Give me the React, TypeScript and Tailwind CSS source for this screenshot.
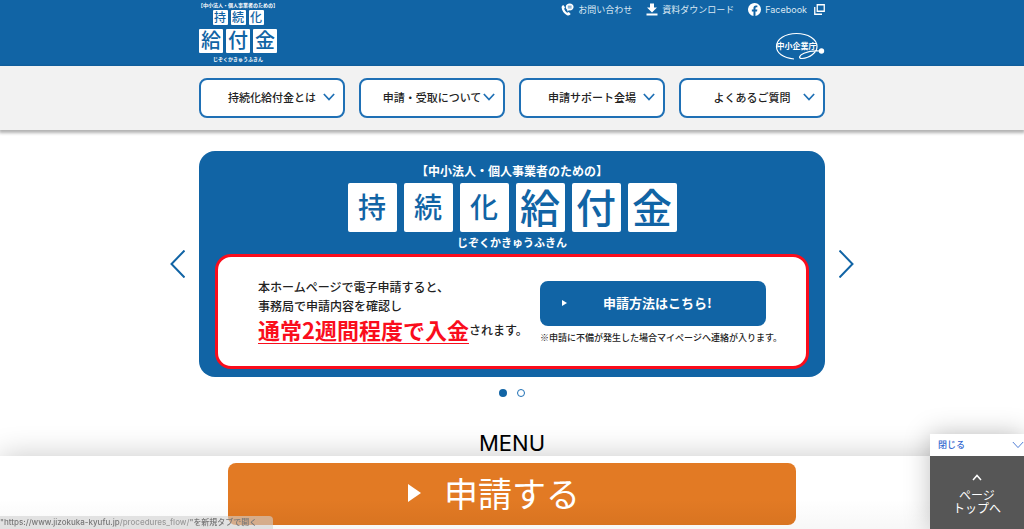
import type { ReactNode } from "react";

type NavItem = {
  label: string;
  href: string;
};

const navItems: NavItem[] = [
  { label: "持続化給付金とは", href: "#about" },
  { label: "申請・受取について", href: "#procedures" },
  { label: "申請サポート会場", href: "#support" },
  { label: "よくあるご質問", href: "#faq" },
];

const PhoneIcon = () => (
  <svg viewBox="0 0 26 26" className="size-[13px] text-white" fill="currentColor" aria-hidden="true">
    <path d="M4.500 4 8 8.600 6.400 11.600C7.400 14.800 9.600 17.800 12.400 19.600L15.600 18.200 19.400 22.200C18 24.800 15 25.800 12 24.400 6 21.600 1.600 15.400 1.200 9.200 1.200 6.800 2.400 4.800 4.500 4Z" />
    <path d="M17.400 1C12.900 1 9.600 4 9.600 8c0 2.600 1.200 4.600 3.200 5.800L12.400 17l3.600-2.300c.5.1.9.1 1.400.1 4.400 0 7.800-2.800 7.800-6.800S21.800 1 17.400 1Z" />
    <path d="M13.600 6.400h7.600M13.600 9.800h7.600" stroke="#1164a5" strokeWidth="1.500" />
  </svg>
);

const DownloadIcon = () => (
  <svg viewBox="0 0 24 26" className="h-[13px] w-3 text-white" fill="currentColor" aria-hidden="true">
    <path d="M8 1h8v8h6L12 19 2 9h6zM1 21h22v4H1z" />
  </svg>
);

const FacebookIcon = () => (
  <svg viewBox="0 0 24 24" className="size-[13px] text-white" fill="currentColor" aria-hidden="true">
    <path d="M24 12a12 12 0 1 0-13.900 11.900v-8.400H7.100V12h3V9.400c0-3 1.800-4.700 4.500-4.700 1.300 0 2.700.2 2.700.2v3h-1.500c-1.500 0-2 .9-2 1.900V12h3.400l-.5 3.500h-2.900v8.400A12 12 0 0 0 24 12Z" />
  </svg>
);

const WindowIcon = () => (
  <svg viewBox="0 0 22 22" className="ml-[3px] size-[11px] text-white" fill="none" stroke="currentColor" strokeWidth="2.600" aria-hidden="true">
    <path d="M6.500 1.500h14v13h-14z" />
    <path d="M1.500 6v14.500H16" />
  </svg>
);

const AgencyLogo = () => (
  <svg viewBox="0 0 50 30" className="h-[30px] w-[50px]" role="img" aria-label="中小企業庁">
    <path
      d="M19 27C8 26 1.500 21 1.500 14.500 1.500 7 10 1.500 21.500 1.500S42 7 42 14.500c0 6-7 11.500-15 12-4 .2-3-3 2-5.200 5-2.200 11-2.600 16-2.300"
      fill="none"
      stroke="#fff"
      strokeWidth="1.200"
    />
    <circle cx="46.500" cy="19" r="2.700" fill="#fff" />
    <text x="21.500" y="17" textAnchor="middle" fontSize="8" fontWeight="700" fill="#fff">
      中小企業庁
    </text>
  </svg>
);

const ChevronDown = ({ className }: { className: string }) => (
  <svg viewBox="0 0 14 9" className={className} fill="none" stroke="currentColor" aria-hidden="true">
    <path d="m1 1 6 6.500L13 1" />
  </svg>
);

const HeaderLink = ({ href, children }: { href: string; children: ReactNode }) => (
  <a href={href} className="flex items-center gap-1 text-[9px] leading-3 text-[#dbe8f3]">
    {children}
  </a>
);

const HeaderLogo = () => (
  <a href="#top" className="flex w-[78px] flex-col items-center text-white">
    <span className="text-[5px] leading-[10px] font-bold whitespace-nowrap">【中小法人・個人事業者のための】</span>
    <span className="flex gap-[3px]">
      {["持", "続", "化"].map((char) => (
        <span key={char} className="flex size-[15px] items-center justify-center rounded-[1px] bg-white pb-0.5 text-[12px] leading-none font-medium text-[#1164a5]">
          {char}
        </span>
      ))}
    </span>
    <span className="mt-1 flex gap-[3px]">
      {["給", "付", "金"].map((char) => (
        <span key={char} className="flex size-6 items-center justify-center rounded-[1px] bg-white pb-0.5 text-[20px] leading-none font-medium text-[#1164a5]">
          {char}
        </span>
      ))}
    </span>
    <span className="text-[5px] leading-[11px] font-bold">じぞくかきゅうふきん</span>
  </a>
);

const Header = () => (
  <header className="bg-[#1164a5]">
    <div className="mx-auto flex h-[66px] max-w-[626px] items-start justify-between">
      <HeaderLogo />
      <div className="flex flex-col items-end gap-4 pt-[3px]">
        <div className="flex gap-[14px]">
          <HeaderLink href="#contact">
            <PhoneIcon />
            お問い合わせ
          </HeaderLink>
          <HeaderLink href="#download">
            <DownloadIcon />
            資料ダウンロード
          </HeaderLink>
          <HeaderLink href="#facebook">
            <FacebookIcon />
            <span className="font-[Inter]">Facebook</span>
            <WindowIcon />
          </HeaderLink>
        </div>
        <AgencyLogo />
      </div>
    </div>
  </header>
);

const NavBar = () => (
  <nav className="bg-[#f2f2f2] py-3 shadow-[0_2px_3px_1px_rgba(0,0,0,0.3)]">
    <div className="mx-auto grid max-w-[626px] grid-cols-4 gap-[14px]">
      {navItems.map((item) => (
        <a
          key={item.label}
          href={item.href}
          className="grid h-10 grid-cols-[1fr_auto_1fr] items-center rounded-lg border-2 border-[#1f70b5] bg-white pb-0.5 text-[11px] font-medium text-[#222]"
        >
          <span className="col-start-2 whitespace-nowrap">{item.label}</span>
          <ChevronDown className="mr-2 h-2 w-3 justify-self-end stroke-2 text-[#1f70b5]" />
        </a>
      ))}
    </div>
  </nav>
);

const titleTiles = [
  { char: "持", size: "text-[28px]" },
  { char: "続", size: "text-[28px]" },
  { char: "化", size: "text-[28px]" },
  { char: "給", size: "text-[40px]" },
  { char: "付", size: "text-[40px]" },
  { char: "金", size: "text-[40px]" },
];

const Banner = () => (
  <section className="flex max-w-[626px] flex-1 flex-col items-center rounded-2xl bg-[#1164a5] px-4 pt-3 pb-2">
    <p className="text-xs leading-4 font-bold text-white">【中小法人・個人事業者のための】</p>
    <h1 className="mt-1 flex gap-[7px]">
      {titleTiles.map((tile) => (
        <span
          key={tile.char}
          className={`flex size-[49px] items-center justify-center rounded-xs bg-white pb-1 leading-none font-medium text-[#1164a5] ${tile.size}`}
        >
          {tile.char}
        </span>
      ))}
    </h1>
    <p className="mt-[2px] text-[11px] leading-4 font-bold text-white">じぞくかきゅうふきん</p>
    <div className="mt-1 flex h-[115px] w-full items-start justify-between rounded-2xl border-3 border-[#fa0d1c] bg-white pt-5 pr-6 pl-10 text-[#222]">
      <div>
        <p className="text-xs leading-[19px] font-medium">
          本ホームページで電子申請すると、
          <br />
          事務局で申請内容を確認し
        </p>
        <p className="flex items-center text-xs font-medium">
          <strong className="border-b border-[#fa0d1c] text-[22px] leading-7 font-bold text-[#fa0d1c]">通常2週間程度で入金</strong>
          されます。
        </p>
      </div>
      <div className="pt-1">
        <a href="#flow" className="flex h-[45px] w-[226px] items-center rounded-lg bg-[#1164a5] pb-0.5 pl-[22px] text-[13px] font-bold text-white">
          <svg viewBox="0 0 5 6" className="mr-9 h-[6px] w-[5px]" fill="currentColor" aria-hidden="true">
            <path d="M0 0 5 3 0 6z" />
          </svg>
          申請方法はこちら!
        </a>
        <p className="mt-1 text-[9px] leading-4 font-medium whitespace-nowrap">※申請に不備が発生した場合マイページへ連絡が入ります。</p>
      </div>
    </div>
  </section>
);

const Carousel = () => (
  <div className="mt-[21px]">
    <div className="flex items-center justify-center gap-[14px]">
      <button type="button" aria-label="前へ" className="text-[#1164a5]">
        <svg viewBox="0 0 15 28" className="h-7 w-[15px]" fill="none" stroke="currentColor" strokeWidth="2">
          <path d="M14.500 .5 1.500 14l13 13.500" />
        </svg>
      </button>
      <Banner />
      <button type="button" aria-label="次へ" className="text-[#1164a5]">
        <svg viewBox="0 0 15 28" className="h-7 w-[15px]" fill="none" stroke="currentColor" strokeWidth="2">
          <path d="m.5 .5 13 13.500-13 13.500" />
        </svg>
      </button>
    </div>
    <div className="mt-3 flex justify-center gap-[10px]">
      <button type="button" aria-label="スライド1" className="size-2 rounded-full bg-[#1164a5]" />
      <button type="button" aria-label="スライド2" className="size-2 rounded-full border border-[#1f70b5] bg-white" />
    </div>
  </div>
);

const PageTop = () => (
  <div className="fixed right-0 bottom-0 w-[94px] shadow-[0_0_24px_rgba(0,0,0,0.25)]">
    <button type="button" className="flex h-[22px] w-full items-center justify-between bg-white pl-2 text-[9px] font-medium text-[#3468cf]">
      閉じる
      <ChevronDown className="h-2 w-3 stroke-1" />
    </button>
    <a href="#top" className="flex h-[73px] flex-col items-center bg-[#565656] pt-[18px] text-xs leading-[13px] text-white">
      <svg viewBox="0 0 10 7" className="mb-[7px] h-[7px] w-[10px]" fill="none" stroke="currentColor" strokeWidth="1.500" aria-hidden="true">
        <path d="m1 6 4-4.500L9 6" />
      </svg>
      <span>ページ</span>
      <span>トップへ</span>
    </a>
  </div>
);

const ApplyBar = () => (
  <div className="fixed inset-x-0 bottom-0 bg-linear-to-b from-white from-60% to-[#f7f7f7] pt-[7px] pb-1 shadow-[0_0_30px_rgba(0,0,0,0.22)]">
    <a
      href="#apply"
      className="mx-auto flex h-[62px] max-w-[568px] items-center justify-center gap-[23px] rounded-lg bg-linear-to-b from-[#e27a24] from-60% to-[#d97421] pr-9 pb-0.5 text-[34px] leading-none text-white"
    >
      <svg viewBox="0 0 13 18" className="h-[18px] w-[13px]" fill="currentColor" aria-hidden="true">
        <path d="M0 0 13 9 0 18z" />
      </svg>
      申請する
    </a>
  </div>
);

const App = () => {
  return (
    <div id="top" className="bg-white font-['Noto_Sans_CJK_JP',sans-serif]">
      <Header />
      <NavBar />
      <main>
        <Carousel />
        <h2 className="mt-8 text-center font-[Inter] text-[22px] leading-7 text-black">MENU</h2>
      </main>
      <ApplyBar />
      <PageTop />
      <div className="fixed bottom-0 left-0 rounded-tr-sm bg-[#d2d2d2]/60 pr-4 font-[Inter,'Noto_Sans_CJK_JP',sans-serif] text-[8px] leading-[13px] font-medium text-[#777]">
        "https://www.jizokuka-kyufu.jp<span className="text-[#999]">/procedures_flow/</span>"を新規タブで開く
      </div>
    </div>
  );
};

export default App;
